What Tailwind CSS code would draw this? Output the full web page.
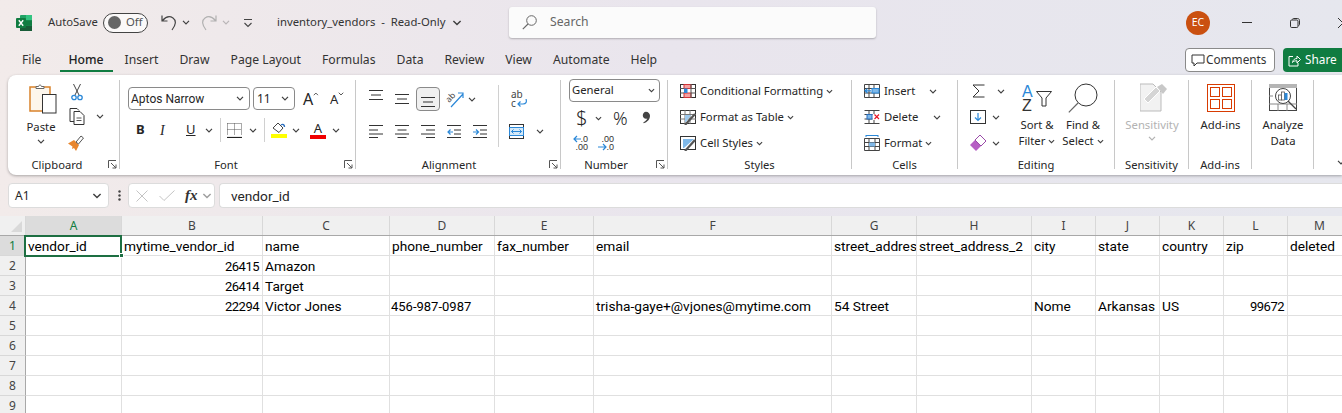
<!DOCTYPE html>
<html lang="en">
<head>
<meta charset="UTF-8">
<title>inventory_vendors - Read-Only</title>
<script src="https://cdn.jsdelivr.net/npm/@tailwindcss/browser@4"></script>
</head>
<body class="w-[1342px] h-[413px] overflow-hidden bg-linear-to-r from-[#f2ebea] via-[#e9e5ed] to-[#e6e7ee] font-['Noto_Sans'] text-[11.3px] text-[#262626]">

<svg class="hidden">
  <symbol id="chev" viewBox="0 0 8 5"><path d="M1 .8 4 3.800 7 .8" fill="none" stroke="#404040" stroke-width="1.2"/></symbol>
  <symbol id="launch" viewBox="0 0 9 9"><path d="M.5 8V.5H8M3 3l5 5M8 4.500V8H4.500" fill="none" stroke="#555" stroke-width="1"/></symbol>
  <symbol id="lines" viewBox="0 0 14 14"><path d="M0 1.500h14M0 6h9M0 10h14M0 13.500h9" stroke="#333" stroke-width="1"/></symbol>
</svg>

<!-- title bar -->
<header class="flex items-center h-[45px] text-[#333] [&>*]:shrink-0">
  <svg class="ml-[16px] w-[16px] h-[16px]" viewBox="0 0 16 16">
    <rect x="4" width="12" height="16" rx="1" fill="#21a366"/>
    <rect x="10" y="0" width="6" height="5.3" fill="#33c481"/>
    <rect x="4" y="10.7" width="12" height="5.3" fill="#185c37"/>
    <rect x="10" y="5.3" width="6" height="5.4" fill="#107c41"/>
    <rect y="3" width="10" height="10" rx="1" fill="#107c41"/>
    <path d="M2.800 5.300 7.200 10.700M7.200 5.300 2.800 10.700" stroke="#fff" stroke-width="1.4"/>
  </svg>
  <span class="ml-[16px] w-[49px] whitespace-nowrap">AutoSave</span>
  <div class="ml-[6px] flex items-center w-[45px] h-[20px] rounded-full border border-[#444] bg-white/70 pl-[4px]">
    <span class="w-[13px] h-[13px] rounded-full bg-[#666]"></span>
    <span class="ml-[5px] text-[#555]">Off</span>
  </div>
  <svg class="ml-[13px] w-[16px] h-[18px]" viewBox="0 0 16 18"><path d="M1 1.500V7h5.500M1.500 6.500C5 2.500 9 2 12 4c3.500 2.500 3 7-1 12" fill="none" stroke="#444" stroke-width="1.2"/></svg>
  <svg class="ml-[5px] w-[8px] h-[5px]"><use href="#chev"/></svg>
  <svg class="ml-[11px] w-[16px] h-[18px]" viewBox="0 0 16 18"><path d="M15 1.500V7H9.500M14.500 6.500C11 2.500 7 2 4 4c-3.500 2.500-3 7 1 12" fill="none" stroke="#b0b0b0" stroke-width="1.2"/></svg>
  <svg class="ml-[5px] w-[8px] h-[5px] opacity-30"><use href="#chev"/></svg>
  <svg class="ml-[13px] w-[10px] h-[10px]" viewBox="0 0 10 10"><path d="M1 1.500h8M1.500 5 5 8.500 8.500 5" fill="none" stroke="#444" stroke-width="1.1"/></svg>
  <span class="ml-[24px] w-[171px] whitespace-pre">inventory_vendors  -  Read-Only</span>
  <svg class="ml-[4px] w-[10px] h-[6px]"><use href="#chev"/></svg>
  <div class="ml-[47px] flex items-center w-[367px] h-[31px] bg-[#fbfbfb] rounded-[3px] shadow-[0_1px_2px_rgba(0,0,0,.25)] pl-[13px]">
    <svg class="w-[15px] h-[15px]" viewBox="0 0 15 15"><circle cx="9.500" cy="5.500" r="4.800" fill="none" stroke="#666"/><path d="M6 9 .8 14.200" stroke="#666" stroke-width="1.1"/></svg>
    <span class="ml-[13px] text-[12.2px] text-[#666]">Search</span>
  </div>
  <div class="ml-[310px] flex items-center justify-center w-[24px] h-[24px] rounded-full bg-[#ca5010] text-white text-[10.5px]">EC</div>
  <span class="ml-[32px] w-[10px] h-px bg-[#333]"></span>
  <svg class="ml-[38px] w-[10px] h-[10px]" viewBox="0 0 10 10"><path d="M2.500 1.500C2.500 .8 3 .5 3.500 .5h4C8.700.5 9.500 1.300 9.500 2.500v4c0 .6-.4 1-1 1" fill="none" stroke="#333"/><rect x=".5" y="2" width="7.5" height="7.5" rx="1.2" fill="none" stroke="#333"/></svg>
  <svg class="ml-[38px] w-[6px] h-[10px]" viewBox="0 0 6 10"><path d="M0 0 5 5 0 10" fill="none" stroke="#333"/></svg>
</header>

<!-- tabs -->
<nav class="flex items-center h-[30px] text-[12.2px] text-[#333]">
  <div class="ml-[22px] flex items-center gap-[21px] w-[1163px]">
    <span>File</span>
    <span class="relative font-medium text-[#222] ml-[6px]">Home<span class="absolute left-[-9px] right-[-9px] top-[19px] h-[2px] bg-[#107c41]"></span></span>
    <span>Insert</span>
    <span>Draw</span>
    <span>Page Layout</span>
    <span>Formulas</span>
    <span>Data</span>
    <span>Review</span>
    <span>View</span>
    <span>Automate</span>
    <span>Help</span>
  </div>
  <button class="flex items-center gap-[1px] w-[90px] h-[24px] pl-[5px] bg-white border border-[#8a8a8a] rounded-[4px] text-[11.8px]">
    <svg class="w-[14px] h-[13px] shrink-0" viewBox="0 0 14 13"><path d="M1 1h12v8H6l-3 3V9H1z" fill="none" stroke="#333"/></svg>
    Comments
  </button>
  <button class="ml-[8px] flex items-center gap-[4px] w-[59px] h-[24px] pl-[5px] bg-[#107c41] text-white rounded-l-[4px] text-[11.8px]">
    <svg class="w-[13px] h-[13px] shrink-0" viewBox="0 0 13 13"><path d="M5 2.500H1v9.500h9V9M4.500 8.500C5 5.500 7 4.500 9 4.500V2l3.500 3.500L9 9V6.800C7 6.800 5.500 7 4.500 8.500z" fill="none" stroke="#fff"/></svg>
    Share
  </button>
</nav>

<!-- ribbon -->
<section class="ml-[8px] flex h-[100px] bg-white rounded-l-[8px] shadow-[0_1px_3px_rgba(0,0,0,.3)] text-[#262626]">

  <!-- clipboard -->
  <div class="relative w-[112px] flex flex-col">
    <div class="flex h-[82px] pt-[9px]">
      <div class="ml-[14px] w-[38px] flex flex-col items-center">
        <svg class="ml-[4px] w-[28px] h-[30px]" viewBox="0 0 28 30">
          <path d="M1 3h20v24H1z" fill="#fdf6ec" stroke="#d9822b" stroke-width="1.5"/>
          <path d="M7 4.500V2.500h2.500C10 .5 12 .5 12.500 2.500H15v2z" fill="#fff" stroke="#666"/>
          <rect x="13.5" y="10.5" width="13.5" height="18.5" fill="#fff" stroke="#333"/>
        </svg>
        <span class="mt-[5px] leading-[16px]">Paste</span>
        <svg class="mt-[4px] w-[8px] h-[5px]"><use href="#chev"/></svg>
      </div>
      <div class="ml-[9px] flex flex-col items-start">
        <svg class="ml-[2px] w-[12px] h-[17px]" viewBox="0 0 12 17"><path d="M2.500 0 8 11M9.500 0 4 11" stroke="#444"/><circle cx="3" cy="13.500" r="2.200" fill="none" stroke="#2b88d8" stroke-width="1.3"/><circle cx="9" cy="13.500" r="2.200" fill="none" stroke="#2b88d8" stroke-width="1.3"/></svg>
        <div class="mt-[7px] flex items-center">
          <svg class="w-[17px] h-[17px]" viewBox="0 0 17 17"><path d="M5 13.500H1V.5h7l2 2" fill="none" stroke="#333"/><path d="M5 3.500h6l4 4v9H5z" fill="#fff" stroke="#333"/><path d="M7.500 10h5M7.500 12.500h5" stroke="#555"/></svg>
          <svg class="ml-[10px] w-[8px] h-[5px]"><use href="#chev"/></svg>
        </div>
        <svg class="mt-[10px] -ml-[1px] w-[16px] h-[16px]" viewBox="0 0 16 16"><path d="M0 8.500 6 5l5 5-3 6-2-3-2 1 .5-2.500z" fill="#e8862e"/><path d="M8 7l5-6 2.500 2-5 6z" fill="#fff" stroke="#555"/></svg>
      </div>
    </div>
    <div class="flex justify-center w-[98px] text-[11.2px] leading-[16px]">Clipboard</div>
    <svg class="absolute right-[3px] bottom-[6px] w-[9px] h-[9px]"><use href="#launch"/></svg>
    <span class="absolute right-0 top-[5px] h-[89px] w-px bg-[#c8c8c8]"></span>
  </div>

  <!-- font -->
  <div class="relative w-[236px] flex flex-col">
    <div class="h-[82px] pt-[12px] pl-[8px]">
      <div class="flex items-center h-[23px]">
        <div class="flex items-center justify-between w-[122px] h-[23px] pl-[2px] pr-[5px] border border-[#8a8a8a] rounded-[4px]"><span class="font-['Roboto'] text-[12px]">Aptos Narrow</span><svg class="w-[8px] h-[5px]"><use href="#chev"/></svg></div>
        <div class="ml-[3px] flex items-center justify-between w-[42px] h-[23px] px-[3px] pr-[5px] border border-[#8a8a8a] rounded-[4px]"><span class="text-[12px]">11</span><svg class="w-[8px] h-[5px]"><use href="#chev"/></svg></div>
        <span class="ml-[8px] flex items-start w-[16px] text-[16px] leading-[20px]">A<svg class="w-[6px] h-[4px] mt-[3px] rotate-180"><use href="#chev"/></svg></span>
        <span class="ml-[11px] flex items-start w-[16px] text-[13px] leading-[20px]">A<svg class="w-[6px] h-[4px] mt-[3px]"><use href="#chev"/></svg></span>
      </div>
      <div class="mt-[8px] flex items-center h-[24px]">
        <span class="ml-[8px] w-[10px] text-[13px] font-bold">B</span>
        <span class="ml-[14px] w-[10px] font-['Liberation_Serif'] text-[14px] italic">I</span>
        <span class="ml-[16px] w-[12px] text-[13px] underline">U</span>
        <svg class="ml-[7px] w-[8px] h-[5px]"><use href="#chev"/></svg>
        <span class="ml-[7px] w-px h-[24px] bg-[#d0d0d0]"></span>
        <svg class="ml-[6px] w-[15px] h-[15px]" viewBox="0 0 15 15"><path d="M.5.500h14M.5.500v12M14.500.500v12M7.500.500v12M.5 6.500h14" stroke="#555" stroke-dasharray="1 1"/><path d="M0 14.500h15" stroke="#222" stroke-width="1.2"/></svg>
        <svg class="ml-[7px] w-[8px] h-[5px]"><use href="#chev"/></svg>
        <span class="ml-[7px] w-px h-[24px] bg-[#d0d0d0]"></span>
        <div class="ml-[6px] w-[16px] flex flex-col items-center">
          <svg class="w-[14px] h-[11px]" viewBox="0 0 14 11"><path d="M1 6 6 1l5 5-4 4.500z" fill="none" stroke="#444"/><path d="M9 3c2-1.500 3.500 0 3.500 2" fill="none" stroke="#2b6fc0" stroke-width="1.4"/></svg>
          <span class="mt-[1px] w-[16px] h-[4px] bg-[#ffff00]"></span>
        </div>
        <svg class="ml-[5px] w-[8px] h-[5px]"><use href="#chev"/></svg>
        <div class="ml-[10px] w-[16px] flex flex-col items-center">
          <span class="text-[13px] leading-[12px] h-[12px]">A</span>
          <span class="mt-[1px] w-[16px] h-[4px] bg-[#f00000]"></span>
        </div>
        <svg class="ml-[6px] w-[8px] h-[5px]"><use href="#chev"/></svg>
      </div>
    </div>
    <div class="flex justify-center w-[212px] text-[11.2px] leading-[16px]">Font</div>
    <svg class="absolute right-[3px] bottom-[6px] w-[9px] h-[9px]"><use href="#launch"/></svg>
    <span class="absolute right-0 top-[5px] h-[89px] w-px bg-[#c8c8c8]"></span>
  </div>

  <!-- alignment -->
  <div class="relative w-[205px] flex flex-col">
    <div class="flex h-[82px] pt-[12px]">
      <div class="ml-[7px] grid grid-cols-[26px_26px_26px_26px_26px] grid-rows-[24px_24px] gap-y-[8px] place-items-center w-[130px]">
        <svg class="w-[14px] h-[10px] -mt-[8px]" viewBox="0 0 14 10"><path d="M0 .5h14M2 5h10M0 9.500h14" stroke="#333"/></svg>
        <svg class="w-[14px] h-[10px]" viewBox="0 0 14 10"><path d="M0 .5h14M2 5h10M0 9.500h14" stroke="#333"/></svg>
        <div class="flex items-center justify-center w-[24px] h-[24px] bg-[#f0f0f0] border border-[#8a8a8a] rounded-[4px]">
          <svg class="w-[14px] h-[10px] mt-[5px]" viewBox="0 0 14 10"><path d="M0 .5h14M2 5h10M0 9.500h14" stroke="#333"/></svg>
        </div>
        <div class="flex items-center col-span-2 justify-self-start">
          <svg class="ml-[5px] w-[18px] h-[17px] overflow-visible" viewBox="0 0 18 17"><text x="0" y="9" transform="rotate(-45 5 7)" font-family="Noto Sans" font-size="8.5" fill="#444">ab</text><path d="M5 16 17 3M12 2h5v5" fill="none" stroke="#2b88d8" stroke-width="1.2"/></svg>
          <svg class="ml-[4px] w-[8px] h-[5px]"><use href="#chev"/></svg>
        </div>
        <svg class="w-[14px] h-[14px]"><use href="#lines"/></svg>
        <svg class="w-[14px] h-[14px]" viewBox="0 0 14 14"><path d="M0 1.500h14M2.500 6h9M0 10h14M2.500 13.500h9" stroke="#333"/></svg>
        <svg class="w-[14px] h-[14px]" viewBox="0 0 14 14"><path d="M0 1.500h14M5 6h9M0 10h14M5 13.500h9" stroke="#333"/></svg>
        <svg class="w-[14px] h-[14px]" viewBox="0 0 14 14"><path d="M0 1.500h14M7 6h7M7 10h7M0 13.500h14" stroke="#333"/><path d="M6 8H.8M3.500 5.500 1 8l2.500 2.500" fill="none" stroke="#2b88d8" stroke-width="1.2"/></svg>
        <svg class="w-[14px] h-[14px]" viewBox="0 0 14 14"><path d="M0 1.500h14M7 6h7M7 10h7M0 13.500h14" stroke="#333"/><path d="M0 8h5.500M3 5.500 5.500 8 3 10.500" fill="none" stroke="#2b88d8" stroke-width="1.2"/></svg>
      </div>
      <span class="ml-[5px] w-px h-[62px] -mt-[2px] bg-[#d0d0d0]"></span>
      <div class="ml-[12px] flex flex-col">
        <div class="w-[16px] h-[24px] flex flex-col text-[10px] leading-[9px] text-[#444] pt-[3px]">
          <span>ab</span>
          <span class="flex items-center">c<svg class="ml-[1px] w-[10px] h-[9px]" viewBox="0 0 10 9"><path d="M9 0c1 3 0 5-3 5H1M3.500 2.500 1 5l2.500 2.500" fill="none" stroke="#2b88d8" stroke-width="1.2"/></svg></span>
        </div>
        <div class="mt-[8px] -ml-[2px] flex items-center h-[24px]">
          <svg class="w-[15px] h-[15px]" viewBox="0 0 15 15"><rect x=".5" y=".5" width="14" height="14" fill="none" stroke="#333"/><rect x=".5" y="3.5" width="14" height="8" fill="#d5e9f8" stroke="#2b88d8"/><path d="M2.500 7.500h10M4.500 5.500l-2 2 2 2M10.500 5.500l2 2-2 2" fill="none" stroke="#2b88d8"/></svg>
          <svg class="ml-[12px] w-[8px] h-[5px]"><use href="#chev"/></svg>
        </div>
      </div>
    </div>
    <div class="flex justify-center w-[186px] text-[11.2px] leading-[16px]">Alignment</div>
    <svg class="absolute right-[3px] bottom-[6px] w-[9px] h-[9px]"><use href="#launch"/></svg>
    <span class="absolute right-0 top-[5px] h-[89px] w-px bg-[#c8c8c8]"></span>
  </div>

  <!-- number -->
  <div class="relative w-[107px] flex flex-col">
    <div class="h-[82px] pt-[4px] pl-[8px]">
      <div class="flex items-center justify-between w-[91px] h-[23px] pl-[2px] pr-[4px] border border-[#8a8a8a] rounded-[4px]"><span>General</span><svg class="w-[7px] h-[5px]"><use href="#chev"/></svg></div>
      <div class="mt-[4px] flex items-center h-[24px]">
        <span class="ml-[7px] w-[13px] text-[20px] font-light leading-[24px]">$</span>
        <svg class="ml-[6px] w-[7px] h-[5px]"><use href="#chev"/></svg>
        <span class="ml-[11px] w-[18px] text-[18px] font-light leading-[24px]">%</span>
        <svg class="ml-[10px] -mt-[1px] w-[9px] h-[13px]" viewBox="0 0 10 13"><path d="M5.500 0C8 0 10 2 10 4.500c0 4-3 7-7 8.500l-.5-1C5 10.500 6.500 9 7 7.500 4.500 8.500 2 7 2 4.200 2 2 3.500 0 5.500 0z" fill="#444"/></svg>
      </div>
      <div class="mt-[3px] ml-[4px] flex items-center h-[19px]">
        <div class="relative w-[15px] h-[16px] font-['Liberation_Sans'] text-[9px] leading-[8px] text-right text-[#333]">.0<br>.00
          <svg class="absolute left-0 top-0 w-[8px] h-[8px]" viewBox="0 0 8 8"><path d="M8 4H1M4 1 1 4l3 3" fill="none" stroke="#2b88d8" stroke-width="1.2"/></svg>
        </div>
        <div class="relative ml-[10px] w-[16px] h-[16px] font-['Liberation_Sans'] text-[9px] leading-[8px] text-right text-[#333]">.00<br>.0
          <svg class="absolute left-0 top-[8px] w-[9px] h-[8px]" viewBox="0 0 9 8"><path d="M0 4h8M5 1l3 3-3 3" fill="none" stroke="#2b88d8" stroke-width="1.2"/></svg>
        </div>
      </div>
    </div>
    <div class="flex justify-center w-[84px] ml-[3px] text-[11.2px] leading-[16px]">Number</div>
    <svg class="absolute right-[3px] bottom-[6px] w-[9px] h-[9px]"><use href="#launch"/></svg>
    <span class="absolute right-0 top-[5px] h-[89px] w-px bg-[#c8c8c8]"></span>
  </div>

  <!-- styles -->
  <div class="relative w-[184px] flex flex-col">
    <div class="h-[82px] pt-[6px] pl-[12px] flex flex-col gap-[6px]">
      <div class="flex items-center h-[20px] whitespace-nowrap">
        <svg class="w-[16px] h-[14px]" viewBox="0 0 16 14"><rect x=".5" y=".5" width="15" height="13" fill="#fff" stroke="#333"/><rect x="4" y=".5" width="7" height="4" fill="#f4a0a0" stroke="#d13438"/><rect x="4" y="9" width="7" height="4.5" fill="#f4a0a0" stroke="#d13438"/><rect x="4" y="4.5" width="3.5" height="4.5" fill="#2b88d8"/><path d="M0 4.500h4M11 4.500h5M0 9h4M11 9h5M11 0v14" stroke="#555"/></svg>
        <span class="ml-[4px]">Conditional Formatting</span>
        <svg class="ml-[3px] w-[7px] h-[5px]"><use href="#chev"/></svg>
      </div>
      <div class="flex items-center h-[20px] whitespace-nowrap">
        <svg class="w-[16px] h-[15px]" viewBox="0 0 16 15"><rect x=".5" y=".5" width="15" height="13" fill="#fff" stroke="#333"/><path d="M0 4.500h16M0 9h16M5 0v14M10 0v14" stroke="#777"/><path d="M5 5h6l-5 7H5z" fill="#9cc9ee"/><path d="M5 15 15 4" stroke="#555" stroke-width="2.2"/></svg>
        <span class="ml-[4px]">Format as Table</span>
        <svg class="ml-[3px] w-[7px] h-[5px]"><use href="#chev"/></svg>
      </div>
      <div class="flex items-center h-[20px] whitespace-nowrap">
        <svg class="w-[16px] h-[15px]" viewBox="0 0 16 15"><rect x=".5" y=".5" width="15" height="13" fill="#fff" stroke="#333"/><path d="M3 3h11l-10 9H3z" fill="#7fb8e8"/><path d="M5 15 15 4" stroke="#555" stroke-width="2.2"/></svg>
        <span class="ml-[4px]">Cell Styles</span>
        <svg class="ml-[3px] w-[7px] h-[5px]"><use href="#chev"/></svg>
      </div>
    </div>
    <div class="flex justify-center text-[11.2px] leading-[16px] w-[183px]">Styles</div>
    <span class="absolute right-0 top-[5px] h-[89px] w-px bg-[#c8c8c8]"></span>
  </div>

  <!-- cells -->
  <div class="relative w-[106px] flex flex-col">
    <div class="h-[82px] pt-[6px] pl-[12px] flex flex-col gap-[6px]">
      <div class="flex items-center h-[20px]">
        <svg class="w-[16px] h-[14px]" viewBox="0 0 16 14"><path d="M.5.500h15v13H.5zM.5 4.500h15M.5 9h15M5 0v14M10 0v14" fill="#fff" stroke="#444"/><rect x="8" y="4.5" width="7" height="4.5" fill="#7fb8e8" stroke="#2b88d8"/><path d="M7 6.800H1M3.500 4.500 1 6.800 3.500 9" fill="none" stroke="#2b88d8" stroke-width="1.2"/></svg>
        <span class="ml-[4px] w-[45px]">Insert</span>
        <svg class="w-[8px] h-[5px]"><use href="#chev"/></svg>
      </div>
      <div class="flex items-center h-[20px]">
        <svg class="w-[16px] h-[14px]" viewBox="0 0 16 14"><path d="M.5.500h15M.5 13.500h15M.5 4.500h8M.5 9h8M5 0v14M10 0v4M10 10v4" fill="none" stroke="#444"/><rect x="3" y="4.5" width="5" height="4.5" fill="#7fb8e8" stroke="#2b6fc0"/><path d="M10.500 4.500l4.500 4.500M15 4.500 10.500 9" stroke="#e81123" stroke-width="1.1"/></svg>
        <span class="ml-[4px] w-[49px]">Delete</span>
        <svg class="w-[8px] h-[5px]"><use href="#chev"/></svg>
      </div>
      <div class="flex items-center h-[20px]">
        <svg class="w-[16px] h-[16px]" viewBox="0 0 16 16"><path d="M2 .5h12M2 0v2M14 0v2" stroke="#2b88d8"/><path d="M.5 3.500h15v12H.5zM.5 7.500h15M.5 11.500h15M5 3v13M11 3v13" fill="#fff" stroke="#444"/><rect x="5" y="7.5" width="6" height="4" fill="#7fb8e8"/></svg>
        <span class="ml-[4px]">Format</span>
        <svg class="ml-[3px] w-[7px] h-[5px]"><use href="#chev"/></svg>
      </div>
    </div>
    <div class="flex justify-center w-[105px] text-[11.2px] leading-[16px]">Cells</div>
    <span class="absolute right-0 top-[5px] h-[89px] w-px bg-[#c8c8c8]"></span>
  </div>

  <!-- editing -->
  <div class="relative w-[157px] flex flex-col">
    <div class="flex h-[82px]">
      <div class="ml-[12px] w-[43px] pt-[6px] flex flex-col gap-[6px]">
        <div class="flex items-center h-[20px]"><svg class="ml-[2px] w-[13px] h-[14px]" viewBox="0 0 13 14"><path d="M12.500 1H1l6 6-6 6h11.500" fill="none" stroke="#333"/></svg><svg class="ml-[12px] w-[8px] h-[5px]"><use href="#chev"/></svg></div>
        <div class="flex items-center h-[20px]"><svg class="w-[16px] h-[14px]" viewBox="0 0 16 14"><rect x=".5" y=".5" width="15" height="13" fill="#fff" stroke="#333"/><path d="M8 3v7M5 7.500 8 10.500l3-3" fill="none" stroke="#2b88d8" stroke-width="1.2"/></svg><svg class="ml-[6px] w-[8px] h-[5px]"><use href="#chev"/></svg></div>
        <div class="flex items-center h-[20px]"><svg class="w-[16px] h-[16px]" viewBox="0 0 16 16"><path d="M0 10 10 0l6 6-10 10z" fill="#b65fc4"/><path d="M5 5 10 0l6 6-5 5z" fill="#fff" stroke="#9a4aa8"/></svg><svg class="ml-[6px] w-[8px] h-[5px]"><use href="#chev"/></svg></div>
      </div>
      <div class="w-[48px] pt-[8px] flex flex-col items-center">
        <div class="flex items-start h-[30px] w-[30px]">
          <div class="w-[14px] text-[16px] leading-[14px] pt-[2px] font-['Liberation_Sans'] font-light"><span class="block text-[#2b88d8]">A</span><span class="block text-[#333]">Z</span></div>
          <svg class="mt-[8px] w-[16px] h-[16px]" viewBox="0 0 16 16"><path d="M.5.500h15L10 7v8H6V7z" fill="#fff" stroke="#333"/></svg>
        </div>
        <span class="mt-[4px] leading-[16px] whitespace-nowrap">Sort &amp;</span>
        <span class="flex items-center leading-[16px] whitespace-nowrap">Filter<svg class="ml-[3px] w-[7px] h-[5px]"><use href="#chev"/></svg></span>
      </div>
      <div class="w-[46px] pt-[8px] ml-[-1px] flex flex-col items-center">
        <svg class="w-[30px] h-[30px]" viewBox="0 0 30 30"><circle cx="18" cy="12" r="11" fill="none" stroke="#333"/><path d="M10 20 .8 29.300" stroke="#666" stroke-width="1.2"/></svg>
        <span class="mt-[4px] leading-[16px] whitespace-nowrap">Find &amp;</span>
        <span class="flex items-center leading-[16px] whitespace-nowrap">Select<svg class="ml-[3px] w-[7px] h-[5px]"><use href="#chev"/></svg></span>
      </div>
    </div>
    <div class="flex justify-center w-[156px] text-[11.2px] leading-[16px]">Editing</div>
    <span class="absolute right-0 top-[5px] h-[89px] w-px bg-[#c8c8c8]"></span>
  </div>

  <!-- sensitivity -->
  <div class="relative w-[74px] flex flex-col">
    <div class="h-[82px] pt-[8px] flex flex-col items-center">
      <svg class="ml-[4px] w-[28px] h-[29px]" viewBox="0 0 28 29"><path d="M0 1h13l8 8v19H0z" fill="#f2f2f2" stroke="#bbb"/><path d="M4 16 16 4l4 4L8 20z" fill="#d5d5d5" stroke="#fff"/><path d="M17 4l5-3 5 5-4 5z" fill="#c8c8c8"/></svg>
      <span class="mt-[5px] text-[#b3b3b3] leading-[16px]">Sensitivity</span>
      <svg class="mt-[3px] w-[8px] h-[5px] opacity-40"><use href="#chev"/></svg>
    </div>
    <div class="flex justify-center w-[73px] text-[11.2px] leading-[16px]">Sensitivity</div>
    <span class="absolute right-0 top-[5px] h-[89px] w-px bg-[#c8c8c8]"></span>
  </div>

  <!-- add-ins -->
  <div class="relative w-[63px] flex flex-col">
    <div class="h-[82px] pt-[9px] flex flex-col items-center">
      <svg class="w-[28px] h-[28px]" viewBox="0 0 28 28"><rect x=".5" y=".5" width="27" height="27" fill="none" stroke="#d83b01"/><rect x="3.5" y="3.5" width="9" height="9" fill="none" stroke="#d83b01"/><rect x="15.5" y="3.5" width="9" height="9" fill="none" stroke="#d83b01"/><rect x="3.5" y="15.5" width="9" height="9" fill="none" stroke="#d83b01"/><rect x="15.5" y="15.5" width="9" height="9" fill="none" stroke="#d83b01"/></svg>
      <span class="mt-[5px] leading-[16px]">Add-ins</span>
    </div>
    <div class="flex justify-center w-[62px] text-[11.2px] leading-[16px]">Add-ins</div>
    <span class="absolute right-0 top-[5px] h-[89px] w-px bg-[#c8c8c8]"></span>
  </div>

  <!-- analyze -->
  <div class="relative w-[62px] flex flex-col">
    <div class="h-[82px] pt-[9px] flex flex-col items-center">
      <svg class="w-[28px] h-[28px]" viewBox="0 0 28 28"><rect x=".5" y=".5" width="27" height="26" fill="#fff" stroke="#444"/><rect width="28" height="4" fill="#b5b5b5"/><path d="M0 20h28M9 20v7M18 20v7M0 12h4" stroke="#888"/><circle cx="14" cy="12" r="7.5" fill="#fff" stroke="#444"/><path d="M19 17l8 8" stroke="#444" stroke-width="1.3"/><rect x="9.5" y="11" width="3" height="5" fill="#fff" stroke="#555" stroke-width=".8"/><rect x="12.5" y="8" width="3" height="8" fill="#fff" stroke="#555" stroke-width=".8"/><rect x="15.5" y="9" width="3" height="7" fill="#2b88d8"/></svg>
      <span class="mt-[5px] leading-[16px]">Analyze</span>
      <span class="leading-[16px]">Data</span>
    </div>
    <span class="absolute right-0 top-[5px] h-[89px] w-px bg-[#c8c8c8]"></span>
  </div>

  <div class="flex-1 flex items-end justify-end pb-[10px]">
    <svg class="w-[8px] h-[5px] -mr-[3px]"><use href="#chev"/></svg>
  </div>
</section>

<!-- formula bar -->
<div class="mt-[8px] ml-[8px] flex items-center h-[25px]">
  <div class="flex items-center justify-between w-[101px] h-[25px] pl-[6px] pr-[6px] bg-white border border-[#dcdcdc] rounded-[4px]"><span class="text-[12px]">A1</span><svg class="w-[10px] h-[6px]"><use href="#chev"/></svg></div>
  <svg class="ml-[9px] w-[3px] h-[11px]" viewBox="0 0 3 11"><circle cx="1.500" cy="1.500" r="1.200" fill="#444"/><circle cx="1.500" cy="5.500" r="1.200" fill="#444"/><circle cx="1.500" cy="9.500" r="1.200" fill="#444"/></svg>
  <div class="ml-[7px] flex items-center w-[87px] h-[25px] pl-[7px] bg-white border border-[#dcdcdc] rounded-[4px]">
    <svg class="w-[12px] h-[12px]" viewBox="0 0 12 12"><path d="M.5.500 11.500 11.500M11.500.500.5 11.500" stroke="#c4c4c4"/></svg>
    <svg class="ml-[11px] w-[16px] h-[11px]" viewBox="0 0 16 11"><path d="M.5 6 5 10.500 15.500.5" fill="none" stroke="#c4c4c4"/></svg>
    <span class="ml-[10px] font-['Liberation_Serif'] italic font-semibold text-[15px] text-[#333]">fx</span>
    <svg class="ml-[4px] w-[10px] h-[6px] opacity-50"><use href="#chev"/></svg>
  </div>
  <div class="ml-[4px] flex items-center flex-1 h-[25px] pl-[11px] pt-[2px] bg-white border border-[#dcdcdc] border-r-0 rounded-l-[4px] font-['Roboto'] text-[13.7px]">vendor_id</div>
</div>

<!-- sheet -->
<div id="sheet" class="relative mt-[8px] h-[197px] overflow-hidden bg-white font-['Roboto'] text-[13.7px] text-black"></div>

<script>
  // column letters and the rows that have something in them
  const letters = ['A','B','C','D','E','F','G','H','I','J','K','L','M'];
  const rows = {
    1: ['vendor_id','mytime_vendor_id','name','phone_number','fax_number','email','street_address','street_address_2','city','state','country','zip','deleted'],
    2: ['','26415','Amazon'],
    3: ['','26414','Target'],
    4: ['','22294','Victor Jones','456-987-0987','','trisha-gaye+@vjones@mytime.com','54 Street','','Nome','Arkansas','US','99672',''],
  };
  const rowClass = 'grid grid-cols-[26px_96px_141px_127px_105px_99px_238px_85px_115px_64px_64px_64px_64px_64px] w-[1400px] h-[20px]';
  const sheet = document.getElementById('sheet');

  let html = `<div class="${rowClass} bg-[#f0f0f0] border-b border-[#a8a8a8] font-['Noto_Sans'] text-[12px] text-[#444]">
    <div class="flex items-end justify-end pr-[3px] pb-[3px] border-r border-[#d8d8d8]"><span class="w-0 h-0 border-l-[11px] border-l-transparent border-b-[11px] border-b-[#d9d9d9]"></span></div>`;
  letters.forEach((l, i) => {
    const active = i === 0 ? 'bg-[#dcdcdc] text-[#107c41]' : '';
    html += `<div class="flex items-center justify-center border-r border-[#d8d8d8] ${active}">${l}</div>`;
  });
  html += '</div>';

  for (let r = 1; r <= 9; r++) {
    const active = r === 1 ? 'bg-[#dcdcdc] text-[#107c41]' : 'bg-[#f0f0f0] text-[#444]';
    html += `<div class="${rowClass}"><div class="flex items-center justify-center border-r border-b border-r-[#a8a8a8] border-b-[#d8d8d8] font-['Noto_Sans'] text-[12px] ${active}">${r}</div>`;
    letters.forEach((l, i) => {
      const val = (rows[r] || [])[i] || '';
      const numeric = /^[\d-]+$/.test(val);
      const isPhone = val.includes('-') && numeric;
      let align = 'pl-[2px]';
      if (isPhone) align = 'pl-[1px] text-[13px]';
      else if (numeric) align = 'justify-end pr-[3px] text-[13px] tracking-[-0.5px]';
      html += `<div class="flex items-center pt-[2px] overflow-hidden whitespace-nowrap border-r border-b border-[#e0e0e0] ${align}">${val}</div>`;
    });
    html += '</div>';
  }

  // selection box around A1
  html += `<div class="absolute left-[24px] top-[19px] w-[98px] h-[22px] border-2 border-[#1d6f42]"></div>
    <div class="absolute left-[119px] top-[37px] w-[5px] h-[5px] bg-[#1d6f42] border border-white"></div>`;
  sheet.innerHTML = html;
</script>
</body>
</html>
